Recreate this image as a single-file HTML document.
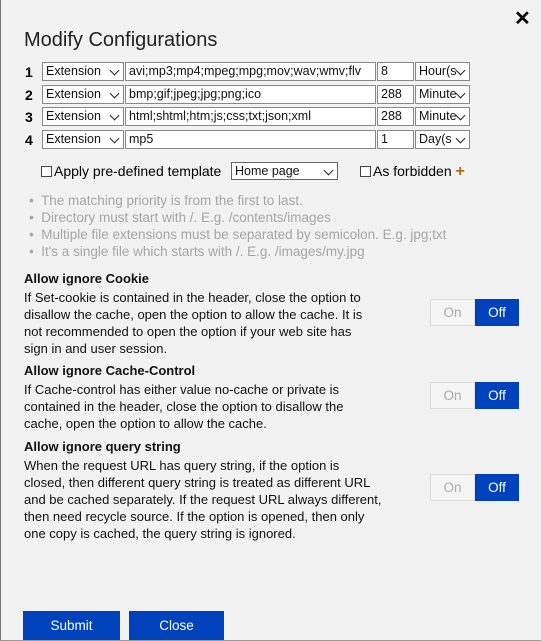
<!DOCTYPE html>
<html><head><style>
*{box-sizing:border-box}
body{margin:0;width:541px;height:641px;background:#f2f2f2;font-family:"Liberation Sans",sans-serif;position:relative;overflow:hidden;border-left:1px solid #777;border-bottom:1px solid #999}
.a{position:absolute}
.t{left:23px;top:29px;font-size:20px;color:#222}
.x{left:513px;top:6px;font-size:20px;font-weight:bold}
.n{font-size:14px;font-weight:bold;left:24px}
.b{position:absolute;height:19px;border:1px solid #888;background:#fff;font-size:12.5px;line-height:17px;padding-left:3px;white-space:nowrap;overflow:hidden;color:#111}
.sel:after{content:"";position:absolute;right:5px;top:4px;width:6px;height:6px;border-right:1.5px solid #222;border-bottom:1.5px solid #222;transform:rotate(45deg)}
.bul{left:28px;font-size:13.5px;color:#a6a6a6;line-height:17px}
.h{left:23px;font-size:13px;font-weight:bold;color:#111}
.p{left:23px;font-size:13px;color:#111;line-height:17px;white-space:nowrap}
.on{position:absolute;width:45px;height:27px;border:1px solid #ddd;background:#f5f5f5;color:#aaa;font-size:13.5px;text-align:center;line-height:25px}
.off{position:absolute;width:44px;height:27px;background:#0042bb;color:#fff;font-size:13.5px;text-align:center;line-height:27px}
.btn{position:absolute;top:611px;height:29px;background:#0042bb;color:#fff;font-size:13.5px;text-align:center;line-height:29px}
.cb{display:inline-block;width:11px;height:11px;border:1px solid #444;background:#fff;vertical-align:-1px;margin-right:2px}
</style></head><body>
<div class="a x">✕</div>
<div class="a t">Modify Configurations</div>

<div class="a n" style="top:64px">1</div>
<div class="b sel" style="left:41px;top:62px;width:82px">Extension</div>
<div class="b" style="left:124px;top:62px;width:251px">avi;mp3;mp4;mpeg;mpg;mov;wav;wmv;flv</div>
<div class="b" style="left:376px;top:62px;width:37px">8</div>
<div class="b sel" style="left:414px;top:62px;width:55px">Hour(s</div>

<div class="a n" style="top:87px">2</div>
<div class="b sel" style="left:41px;top:85px;width:82px">Extension</div>
<div class="b" style="left:124px;top:85px;width:251px">bmp;gif;jpeg;jpg;png;ico</div>
<div class="b" style="left:376px;top:85px;width:37px">288</div>
<div class="b sel" style="left:414px;top:85px;width:55px">Minute</div>

<div class="a n" style="top:109px">3</div>
<div class="b sel" style="left:41px;top:107px;width:82px">Extension</div>
<div class="b" style="left:124px;top:107px;width:251px">html;shtml;htm;js;css;txt;json;xml</div>
<div class="b" style="left:376px;top:107px;width:37px">288</div>
<div class="b sel" style="left:414px;top:107px;width:55px">Minute</div>

<div class="a n" style="top:132px">4</div>
<div class="b sel" style="left:41px;top:130px;width:82px">Extension</div>
<div class="b" style="left:124px;top:130px;width:251px">mp5</div>
<div class="b" style="left:376px;top:130px;width:37px">1</div>
<div class="b sel" style="left:414px;top:130px;width:55px">Day(s</div>

<div class="a" style="left:40px;top:163px;font-size:14px"><span class="cb"></span>Apply pre-defined template</div>
<div class="b sel" style="left:230px;top:162px;width:107px;height:18px;border-color:#666">Home page</div>
<div class="a" style="left:359px;top:163px;font-size:14px"><span class="cb"></span>As forbidden <span style="color:#b36b00;font-weight:bold;font-size:16px;line-height:14px">+</span></div>

<div class="a bul" style="top:192px">•&nbsp; The matching priority is from the first to last.<br>•&nbsp; Directory must start with /. E.g. /contents/images<br>•&nbsp; Multiple file extensions must be separated by semicolon. E.g. jpg;txt<br>•&nbsp; It's a single file which starts with /. E.g. /images/my.jpg</div>

<div class="a h" style="top:271px">Allow ignore Cookie</div>
<div class="a p" style="top:289px">If Set-cookie is contained in the header, close the option to<br>disallow the cache, open the option to allow the cache. It is<br>not recommended to open the option if your web site has<br>sign in and user session.</div>
<div class="on" style="left:429px;top:299px">On</div><div class="off" style="left:474px;top:299px">Off</div>

<div class="a h" style="top:363px">Allow ignore Cache-Control</div>
<div class="a p" style="top:381px">If Cache-control has either value no-cache or private is<br>contained in the header, close the option to disallow the<br>cache, open the option to allow the cache.</div>
<div class="on" style="left:429px;top:382px">On</div><div class="off" style="left:474px;top:382px">Off</div>

<div class="a h" style="top:439px">Allow ignore query string</div>
<div class="a p" style="top:457px">When the request URL has query string, if the option is<br>closed, then different query string is treated as different URL<br>and be cached separately. If the request URL always different,<br>then need recycle source. If the option is opened, then only<br>one copy is cached, the query string is ignored.</div>
<div class="on" style="left:429px;top:474px">On</div><div class="off" style="left:474px;top:474px">Off</div>

<div class="btn" style="left:22px;width:97px">Submit</div>
<div class="btn" style="left:128px;width:95px">Close</div>
</body></html>
